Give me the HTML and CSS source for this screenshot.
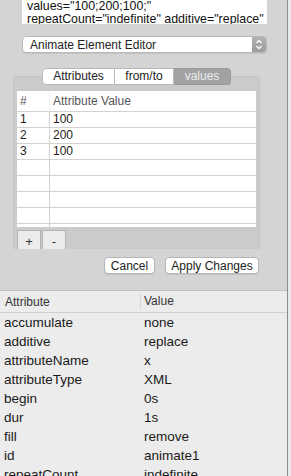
FILE: index.html
```html
<!DOCTYPE html>
<html lang="en">
<head>
  <meta charset="UTF-8">
  <meta name="viewport" content="width=device-width, initial-scale=1.0">
  <title>Animate Element Editor</title>
  <link rel="stylesheet" href="styles.css">
</head>
<body>

<div class="janela">
  <div class="editor">
    <div class="fonte">
      <div>values="100;200;100;"</div>
      <div>repeatCount="indefinite" additive="replace"</div>
    </div>

    <div class="seletor">
      <span class="seletor-texto">Animate Element Editor</span>
      <span class="seletor-setas">
        <svg width="14" height="17" viewBox="0 0 14 17">
          <path d="M4.5 7 L7 4.5 L9.5 7" fill="none" stroke="#fff" stroke-width="1.3"/>
          <path d="M4.5 10 L7 12.5 L9.5 10" fill="none" stroke="#fff" stroke-width="1.3"/>
        </svg>
      </span>
    </div>

    <div class="abas">
      <span class="aba">Attributes</span>
      <span class="aba">from/to</span>
      <span class="aba ativa">values</span>
    </div>

    <div class="grupo">
      <div class="tabela">
        <div class="linha cabecalho">
          <span class="col-num">#</span>
          <span class="col-val">Attribute Value</span>
        </div>
        <div class="linha"><span class="col-num">1</span><span class="col-val">100</span></div>
        <div class="linha"><span class="col-num">2</span><span class="col-val">200</span></div>
        <div class="linha"><span class="col-num">3</span><span class="col-val">100</span></div>
        <div class="linha"><span class="col-num"></span><span class="col-val"></span></div>
        <div class="linha"><span class="col-num"></span><span class="col-val"></span></div>
        <div class="linha"><span class="col-num"></span><span class="col-val"></span></div>
        <div class="linha"><span class="col-num"></span><span class="col-val"></span></div>
        <div class="linha"><span class="col-num"></span><span class="col-val"></span></div>
      </div>
      <div class="mais-menos">
        <button class="botao-mini">+</button>
        <button class="botao-mini">-</button>
      </div>
    </div>

    <div class="acoes">
      <button class="botao">Cancel</button>
      <button class="botao">Apply Changes</button>
    </div>
  </div>

  <div class="atributos">
    <div class="attr-linha attr-cabecalho">
      <span class="attr-nome">Attribute</span>
      <span class="attr-valor">Value</span>
    </div>
    <div class="attr-linha"><span class="attr-nome">accumulate</span><span class="attr-valor">none</span></div>
    <div class="attr-linha"><span class="attr-nome">additive</span><span class="attr-valor">replace</span></div>
    <div class="attr-linha"><span class="attr-nome">attributeName</span><span class="attr-valor">x</span></div>
    <div class="attr-linha"><span class="attr-nome">attributeType</span><span class="attr-valor">XML</span></div>
    <div class="attr-linha"><span class="attr-nome">begin</span><span class="attr-valor">0s</span></div>
    <div class="attr-linha"><span class="attr-nome">dur</span><span class="attr-valor">1s</span></div>
    <div class="attr-linha"><span class="attr-nome">fill</span><span class="attr-valor">remove</span></div>
    <div class="attr-linha"><span class="attr-nome">id</span><span class="attr-valor">animate1</span></div>
    <div class="attr-linha"><span class="attr-nome">repeatCount</span><span class="attr-valor">indefinite</span></div>
  </div>
</div>

</body>
</html>
```

FILE: styles.css
```css
    body {
      margin: 0;
      width: 291px;
      height: 476px;
      overflow: hidden;
      background-color: #e8e8e8;
      font-family: "Liberation Sans", Arial, sans-serif;
      color: #1e1e1e;
    }

    .janela {
      width: 287px;
      height: 476px;
      border-right: 1px solid #8d8d8d;
      overflow: hidden;
    }

    .editor {
      background-color: #d4d4d4;
      height: 290px;
      border-bottom: 1px solid #c2c2c2;
      overflow: hidden;
    }

    .fonte {
      margin-left: 22px;
      width: 240px;
      height: 24px;
      padding-left: 5px;
      background-color: #fff;
      overflow: hidden;
      font-size: 12.4px;
      line-height: 13px;
      white-space: nowrap;
      color: #111;
    }

    .seletor {
      margin: 12px 0 0 22px;
      width: 243px;
      height: 15px;
      border: 1px solid #b9b9b9;
      border-radius: 4px;
      background-color: #fff;
      display: flex;
      align-items: center;
      overflow: hidden;
      box-shadow: 0 1px 0 #c4c4c4;
    }

    .seletor-texto {
      flex: 1;
      padding-left: 7px;
      font-size: 12px;
      color: #222;
    }

    .seletor-setas {
      width: 14px;
      height: 17px;
      display: flex;
      background: linear-gradient(#b3b3b3, #9c9c9c);
    }

    .abas {
      display: flex;
      justify-content: center;
      width: 247px;
      margin: 15px 0 0 13px;
      position: relative;
      z-index: 1;
    }

    .aba {
      height: 15px;
      line-height: 15px;
      font-size: 12px;
      text-align: center;
      background-color: #fff;
      border: 1px solid #b8b8b8;
      border-left: none;
      color: #222;
    }

    .aba:nth-child(1) {
      width: 71px;
      border-left: 1px solid #b8b8b8;
      border-radius: 4px 0 0 4px;
    }

    .aba:nth-child(2) {
      width: 58px;
    }

    .aba:nth-child(3) {
      width: 56px;
      border-radius: 0 4px 4px 0;
    }

    .aba.ativa {
      background-color: #a2a2a2;
      border-color: #9a9a9a;
      color: #ececec;
    }

    .grupo {
      margin: -9px 0 0 13px;
      width: 239px;
      padding: 14px 3px 0 3px;
      background-color: #cbcbcb;
      border: 1px solid #c4c4c4;
      border-bottom: none;
      border-radius: 4px 4px 0 0;
    }

    .tabela {
      height: 136px;
      overflow: hidden;
      background-color: #fff;
    }

    .linha {
      display: flex;
      height: 15px;
      border-bottom: 1px solid #d2d2d2;
      font-size: 12px;
      line-height: 15px;
    }

    .linha.cabecalho {
      height: 20px;
      line-height: 20px;
      color: #555;
    }

    .col-num {
      width: 29px;
      padding-left: 3px;
      border-right: 1px solid #d2d2d2;
    }

    .cabecalho .col-num {
      border-right-color: #eee;
    }

    .col-val {
      flex: 1;
      padding-left: 3px;
    }

    .mais-menos {
      display: flex;
      margin-top: 3px;
      gap: 1px;
    }

    .botao-mini {
      width: 24px;
      height: 19px;
      padding: 0;
      border: 1px solid #b3b3b3;
      border-bottom: none;
      background-color: #ececec;
      font-family: "Liberation Sans", Arial, sans-serif;
      font-size: 13px;
      color: #333;
      line-height: 22px;
    }

    .acoes {
      display: flex;
      justify-content: flex-end;
      gap: 10px;
      margin-top: 8px;
      padding-right: 28px;
    }

    .botao {
      height: 17px;
      padding: 0;
      border: 1px solid #b5b5b5;
      border-radius: 4px;
      background-color: #fff;
      font-family: "Liberation Sans", Arial, sans-serif;
      font-size: 12px;
      white-space: nowrap;
      color: #222;
      box-shadow: 0 1px 0 #c2c2c2;
    }

    .botao:first-child {
      width: 51px;
    }

    .botao:last-child {
      width: 94px;
    }

    .atributos {
      background-color: #ececec;
    }

    .attr-linha {
      display: flex;
      height: 19px;
      line-height: 19px;
      font-size: 13.5px;
      color: #1a1a1a;
    }

    .attr-linha.attr-cabecalho {
      height: 21px;
      line-height: 21px;
      font-size: 12px;
      color: #333;
      border-bottom: 1px solid #cfcfcf;
    }

    .attr-nome {
      width: 136px;
      padding-left: 4px;
    }

    .attr-cabecalho .attr-nome {
      width: 135px;
      padding-left: 5px;
      height: 16px;
      margin-top: 3px;
      line-height: 16px;
      border-right: 1px solid #d6d6d6;
    }

    .attr-valor {
      padding-left: 4px;
    }

    .attr-cabecalho .attr-valor {
      padding-left: 3px;
    }
```
